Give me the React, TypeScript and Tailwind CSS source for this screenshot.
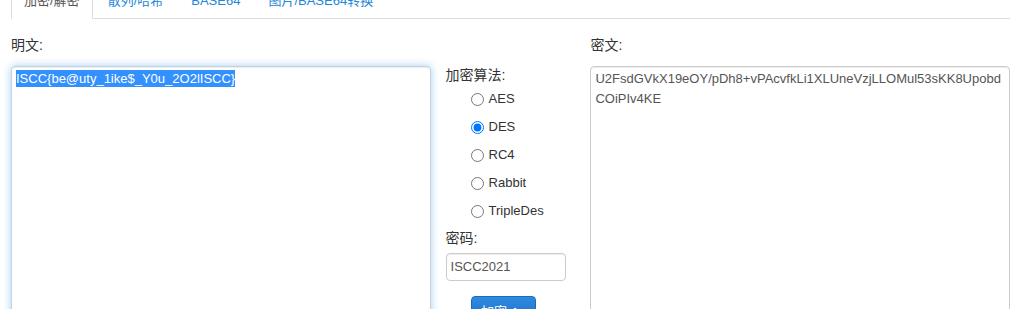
import React from 'react';

const tabs = [
  { label: '加密/解密', active: true },
  { label: '散列/哈希', active: false },
  { label: 'BASE64', active: false },
  { label: '图片/BASE64转换', active: false },
];

const algorithms = ['AES', 'DES', 'RC4', 'Rabbit', 'TripleDes'];

const font = { fontFamily: '"Liberation Sans", "Noto Sans CJK SC", Arial, sans-serif' };

export default function App() {
  return (
    <div className="w-[1030px] h-[309px] overflow-hidden bg-white text-[13px] text-[#333]" style={font}>
      <div className="w-[999px] ml-[11px]">
        {/* Tabs */}
        <ul className="flex -mt-[23px] border-b border-[#ddd] h-[42px]">
          {tabs.map((tab) => (
            <li key={tab.label} className="mr-[2px] -mb-px">
              <a
                className={`block h-[42px] px-[12px] pt-[13px] leading-[20px] rounded-t-[4px] border ${
                  tab.active
                    ? 'bg-white border-[#ddd] border-b-white text-[#555]'
                    : 'border-transparent text-[#1c86d8]'
                }`}
              >
                {tab.label}
              </a>
            </li>
          ))}
        </ul>

        <div className="flex mt-[16px]">
          {/* Plain text */}
          <div className="w-[420px]">
            <div className="h-[20px] leading-[20px] mb-[11px] text-[14px]">明文:</div>
            <div className="h-[260px] rounded-[4px] border border-[#c5d3e0] bg-white pt-[2px] pl-[4px] leading-[20px] text-[#555] shadow-[inset_0_1px_1px_rgba(0,0,0,0.075),0_0_8px_rgba(102,175,233,0.6)]">
              <span className="bg-[#3390ff] text-white py-[1px]">ISCC{'{'}be@uty_1ike$_Y0u_2O2lISCC{'}'}</span>
            </div>
          </div>

          {/* Options */}
          <div className="w-[130px] ml-[15px] pt-[30px]">
            <div className="h-[20px] leading-[20px] text-[14px]">加密算法:</div>
            <div className="flex flex-col">
              {algorithms.map((alg) => (
                <label key={alg} className="h-[28px] flex items-center pl-[25px] gap-[5px] text-[#333]">
                  <input
                    type="radio"
                    name="alg"
                    readOnly
                    checked={alg === 'DES'}
                    className="w-[13px] h-[13px] m-0"
                  />
                  <span>{alg}</span>
                </label>
              ))}
            </div>
            <div className="h-[20px] leading-[20px] mt-[3px] text-[14px]">密码:</div>
            <div className="mt-[5px] w-[120px] h-[28px] rounded-[4px] border border-[#ccc] px-[4px] leading-[26px] text-[#555] shadow-[inset_0_1px_1px_rgba(0,0,0,0.075)]">
              ISCC2021
            </div>
            <button className="mt-[15px] ml-[25px] w-[65px] h-[30px] rounded-[4px] border border-[#1a6bbd] bg-gradient-to-b from-[#2f8ae0] to-[#1a6fc4] text-white flex items-start justify-center gap-[6px] pt-[5px] leading-[20px]">
              <span>加密</span>
              <svg width="12" height="12" viewBox="0 0 12 12" className="mt-[5px]">
                <path d="M2 2 L9 9" stroke="white" strokeWidth="2.4" strokeLinecap="round" />
                <path d="M9 5 L9 9 L5 9" stroke="white" strokeWidth="1.6" fill="none" />
              </svg>
            </button>
          </div>

          {/* Cipher text */}
          <div className="w-[420px] ml-[15px]">
            <div className="h-[20px] leading-[20px] mb-[11px] text-[14px]">密文:</div>
            <div className="h-[260px] rounded-[4px] border border-[#ccc] bg-white pt-[2px] pl-[4px] pr-[4px] leading-[20px] text-[#555] break-all shadow-[inset_0_1px_1px_rgba(0,0,0,0.075)]">
              U2FsdGVkX19eOY/pDh8+vPAcvfkLi1XLUneVzjLLOMul53sKK8UpobdCOiPIv4KE
            </div>
          </div>
        </div>
      </div>
    </div>
  );
}
